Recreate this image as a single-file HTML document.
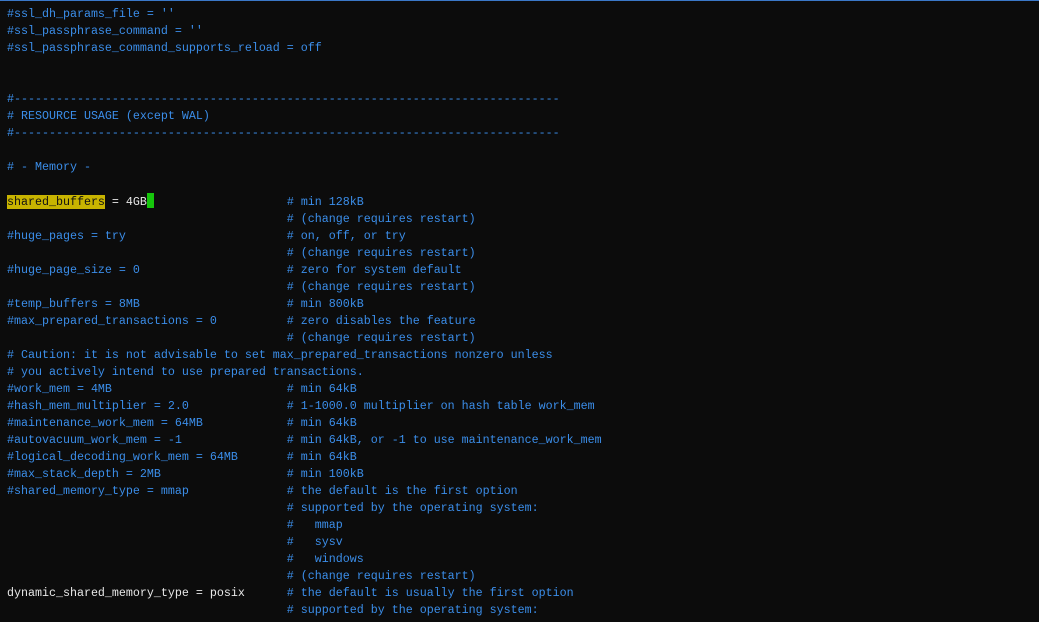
<!DOCTYPE html>
<html><head><meta charset="utf-8"><style>
html,body{margin:0;padding:0;background:#0c0c0c;width:1039px;height:622px;overflow:hidden}
.top{position:absolute;left:0;top:0;width:1039px;height:1px;background:#3b78c8}
pre{position:absolute;left:7px;top:6px;margin:0;font-family:"Liberation Mono",monospace;font-size:11.67px;line-height:17px;color:#3b8eea;white-space:pre}
.w{color:#e8e8e8}
.hl{background:#c8b400;color:#111}
.cur{background:#16c60c;display:inline-block;width:7px;height:15px;vertical-align:-3px}
</style></head><body><div class="top"></div>
<pre>#ssl_dh_params_file = ''
#ssl_passphrase_command = ''
#ssl_passphrase_command_supports_reload = off


#------------------------------------------------------------------------------
# RESOURCE USAGE (except WAL)
#------------------------------------------------------------------------------

# - Memory -

<span class="hl">shared_buffers</span><span class="w"> = 4GB</span><span class="cur"></span>                   # min 128kB
                                        # (change requires restart)
#huge_pages = try                       # on, off, or try
                                        # (change requires restart)
#huge_page_size = 0                     # zero for system default
                                        # (change requires restart)
#temp_buffers = 8MB                     # min 800kB
#max_prepared_transactions = 0          # zero disables the feature
                                        # (change requires restart)
# Caution: it is not advisable to set max_prepared_transactions nonzero unless
# you actively intend to use prepared transactions.
#work_mem = 4MB                         # min 64kB
#hash_mem_multiplier = 2.0              # 1-1000.0 multiplier on hash table work_mem
#maintenance_work_mem = 64MB            # min 64kB
#autovacuum_work_mem = -1               # min 64kB, or -1 to use maintenance_work_mem
#logical_decoding_work_mem = 64MB       # min 64kB
#max_stack_depth = 2MB                  # min 100kB
#shared_memory_type = mmap              # the default is the first option
                                        # supported by the operating system:
                                        #   mmap
                                        #   sysv
                                        #   windows
                                        # (change requires restart)
<span class="w">dynamic_shared_memory_type = posix</span>      # the default is usually the first option
                                        # supported by the operating system:
</pre></body></html>
